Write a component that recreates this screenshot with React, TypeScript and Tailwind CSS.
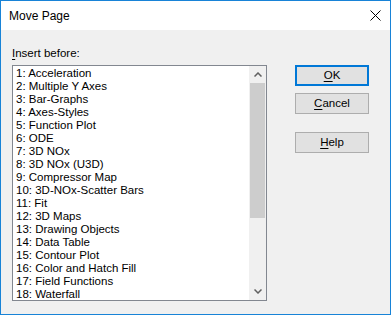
import React from 'react';

const pages = [
  '1: Acceleration',
  '2: Multiple Y Axes',
  '3: Bar-Graphs',
  '4: Axes-Styles',
  '5: Function Plot',
  '6: ODE',
  '7: 3D NOx',
  '8: 3D NOx (U3D)',
  '9: Compressor Map',
  '10: 3D-NOx-Scatter Bars',
  '11: Fit',
  '12: 3D Maps',
  '13: Drawing Objects',
  '14: Data Table',
  '15: Contour Plot',
  '16: Color and Hatch Fill',
  '17: Field Functions',
  '18: Waterfall',
];

const font = { fontFamily: '"Liberation Sans", Arial, sans-serif' };

const DlgButton: React.FC<{ accel: string; rest: string; primary?: boolean }> = ({ accel, rest, primary }) => (
  <button
    className={
      primary
        ? 'w-[74px] h-[21px] bg-[#e1e1e1] border-2 border-[#0078d7] text-[11.5px] text-black leading-none flex items-center justify-center'
        : 'w-[74px] h-[21px] bg-[#e1e1e1] border border-[#adadad] text-[11.5px] text-black leading-none flex items-center justify-center'
    }
  >
    <span>
      <span className="underline underline-offset-2">{accel}</span>
      {rest}
    </span>
  </button>
);

export default function App() {
  return (
    <div className="w-[391px] h-[315px] border border-[#1883d7] bg-[#f0f0f0] flex flex-col" style={font}>
      {/* Title bar */}
      <div className="h-[29px] bg-white flex items-center justify-between pl-[8px] pr-[9px]">
        <span className="text-[12px] text-black">Move Page</span>
        <svg width="11" height="11" viewBox="0 0 11 11">
          <path d="M0.5 0.5 L10.5 10.5 M10.5 0.5 L0.5 10.5" stroke="#000" strokeWidth="1" />
        </svg>
      </div>

      {/* Body */}
      <div className="flex pl-[11px] pt-[12px]">
        <div className="flex flex-col">
          <div className="text-[11.5px] text-black h-[23px] leading-[22px]">
            <span className="underline underline-offset-2">I</span>nsert before:
          </div>
          <div className="w-[255px] h-[236px] border border-[#828790] bg-white flex">
            <div className="flex-1 overflow-hidden pt-[1px] pl-[3px]">
              {pages.map((p) => (
                <div key={p} className="text-[11.5px] leading-[13px] h-[13px] text-black whitespace-nowrap">
                  {p}
                </div>
              ))}
            </div>
            <div className="w-[17px] bg-[#f0f0f0] flex flex-col">
              <div className="h-[17px] flex items-center justify-center">
                <svg width="8" height="5" viewBox="0 0 8 5">
                  <path d="M0.5 4.5 L4 1 L7.5 4.5" stroke="#606060" strokeWidth="1.5" fill="none" />
                </svg>
              </div>
              <div className="h-[135px] mx-[1px] bg-[#cdcdcd]" />
              <div className="flex-1" />
              <div className="h-[17px] flex items-center justify-center">
                <svg width="8" height="5" viewBox="0 0 8 5">
                  <path d="M0.5 0.5 L4 4 L7.5 0.5" stroke="#606060" strokeWidth="1.5" fill="none" />
                </svg>
              </div>
            </div>
          </div>
        </div>

        <div className="flex flex-col pl-[28px] pt-[23px]">
          <DlgButton accel="O" rest="K" primary />
          <div className="h-[7px]" />
          <DlgButton accel="C" rest="ancel" />
          <div className="h-[18px]" />
          <DlgButton accel="H" rest="elp" />
        </div>
      </div>
    </div>
  );
}
